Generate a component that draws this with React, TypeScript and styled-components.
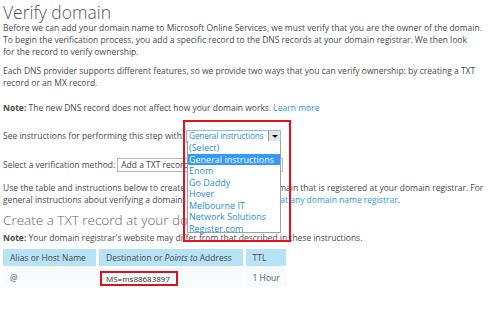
import styled, { createGlobalStyle } from "styled-components";

const Global = createGlobalStyle`
  html, body {
    margin: 0;
    padding: 0;
    background: #fff;
  }
  body {
    font-family: "Open Sans", "Noto Sans", sans-serif;
    font-size: 8.5px;
    line-height: 12px;
    color: #4a4a4a;
  }
`;

const Page = styled.div`
  position: relative;
  width: 489px;
  height: 311px;
  overflow: hidden;
  padding: 0 0 0 3px;
  box-sizing: border-box;
`;

const Title = styled.h1`
  margin: 0 0 -4px;
  font-weight: 300;
  font-size: 17.5px;
  line-height: 24px;
  color: #555;
`;

const SubTitle = styled.h2`
  margin: 6px 0 0;
  font-weight: 300;
  font-size: 13.5px;
  line-height: 16px;
  color: #666;
`;

const Para = styled.p<{ $top: number }>`
  margin: ${(p) => p.$top}px 0 0;
  white-space: nowrap;
`;

const Link = styled.a`
  color: #1e9be0;
  text-decoration: none;
`;

const Row = styled.div<{ $top: number }>`
  display: flex;
  align-items: center;
  gap: 2px;
  margin-top: ${(p) => p.$top}px;
  height: 14px;
`;

const SelectBox = styled.div`
  display: flex;
  align-items: center;
  width: 95px;
  height: 13px;
  box-sizing: border-box;
  border: 1px solid #86bde9;
  background: #fff;
  color: #2b8ed3;
  padding-left: 2px;
`;

const SelectText = styled.span`
  flex: 1;
  font-size: 8.2px;
  letter-spacing: -0.15px;
  white-space: nowrap;
  overflow: hidden;
`;

const Arrow = styled.span`
  display: flex;
  align-items: center;
  justify-content: center;
  width: 11px;
  height: 11px;
  background: #e4e4e4;
  border-left: 1px solid #9a9a9a;
  &::after {
    content: "";
    border-left: 3px solid transparent;
    border-right: 3px solid transparent;
    border-top: 3px solid #111;
  }
`;

const TextBox = styled.div`
  width: 166px;
  height: 14px;
  box-sizing: border-box;
  border: 1px solid #b9b9b9;
  padding-left: 3px;
  line-height: 12px;
  color: #444;
`;

const List = styled.ul`
  position: absolute;
  left: 187px;
  top: 141px;
  width: 94px;
  height: 92px;
  box-sizing: border-box;
  margin: 0;
  padding: 1px 0 0;
  list-style: none;
  background: #fff;
  border: 1px solid #a0a0a0;
  border-top: none;
`;

const Item = styled.li<{ $active?: boolean }>`
  height: 11.5px;
  line-height: 11.5px;
  padding-left: 1px;
  font-size: 9px;
  white-space: nowrap;
  color: ${(p) => (p.$active ? "#fff" : "#2b8ed3")};
  background: ${(p) => (p.$active ? "#3399ff" : "transparent")};
`;

const Callout = styled.div`
  position: absolute;
  left: 183px;
  top: 120px;
  width: 108px;
  height: 122px;
  box-sizing: border-box;
  border: 2px solid #e8101c;
  pointer-events: none;
`;

const Table = styled.table`
  margin: 3px 0 0 -3px;
  border-collapse: separate;
  border-spacing: 3px 2px;
  table-layout: fixed;
  width: 289px;
`;

const Th = styled.th<{ $w: number }>`
  width: ${(p) => p.$w}px;
  height: 17px;
  background: #b6e3f6;
  font-weight: 400;
  text-align: left;
  padding: 0 7px;
  box-sizing: border-box;
  color: #4a4a4a;
  white-space: nowrap;
`;

const Td = styled.td`
  height: 19px;
  background: #f6fbfe;
  padding: 0 7px;
  box-sizing: border-box;
  color: #555;
  white-space: nowrap;
`;

const Marked = styled.span`
  display: inline-block;
  vertical-align: middle;
  margin: 2px 0 0 -6px;
  width: 78px;
  height: 15px;
  box-sizing: border-box;
  border: 2px solid #e0101c;
  padding-left: 4px;
  line-height: 11px;
  font-size: 8px;
  color: #333;
`;

const options = [
  "(Select)",
  "General instructions",
  "Enom",
  "Go Daddy",
  "Hover",
  "Melbourne IT",
  "Network Solutions",
  "Register.com",
];

export default function App() {
  return (
    <>
      <Global />
      <Page>
        <Title>Verify domain</Title>
        <Para $top={2}>
          Before we can add your domain name to Microsoft Online Services, we must verify that you are the owner of the domain.
          <br />
          To begin the verification process, you add a specific record to the DNS records at your domain registrar. We then look
          <br />
          for the record to verify ownership.
        </Para>
        <Para $top={7}>
          Each DNS provider supports different features, so we provide two ways that you can verify ownership: by creating a TXT
          <br />
          record or an MX record.
        </Para>
        <Para $top={13}>
          <b>Note:</b> The new DNS record does not affect how your domain works. <Link>Learn more</Link>
        </Para>
        <Row $top={15}>
          <span>See instructions for performing this step with:</span>
          <SelectBox>
            <SelectText>General instructions</SelectText>
            <Arrow />
          </SelectBox>
        </Row>
        <Row $top={15}>
          <span>Select a verification method:</span>
          <TextBox>Add a TXT record</TextBox>
        </Row>
        <Para $top={10}>
          Use the table and instructions below to create a TXT record for the domain that is registered at your domain registrar. For
          <br />
          general instructions about verifying a domain, see <Link>Verify your domain at any domain name registrar</Link>.
        </Para>
        <SubTitle>Create a TXT record at your domain registrar</SubTitle>
        <Para $top={4}>
          <b>Note:</b> Your domain registrar's website may differ from that described in these instructions.
        </Para>
        <Table>
          <thead>
            <tr>
              <Th $w={92}>Alias or Host Name</Th>
              <Th $w={142}>
                Destination or <i>Points to</i> Address
              </Th>
              <Th $w={40}>TTL</Th>
            </tr>
          </thead>
          <tbody>
            <tr>
              <Td>@</Td>
              <Td>
                <Marked>MS=ms88683897</Marked>
              </Td>
              <Td>1 Hour</Td>
            </tr>
          </tbody>
        </Table>
        <List>
          {options.map((o) => (
            <Item key={o} $active={o === "General instructions"}>
              {o}
            </Item>
          ))}
        </List>
        <Callout />
      </Page>
    </>
  );
}
